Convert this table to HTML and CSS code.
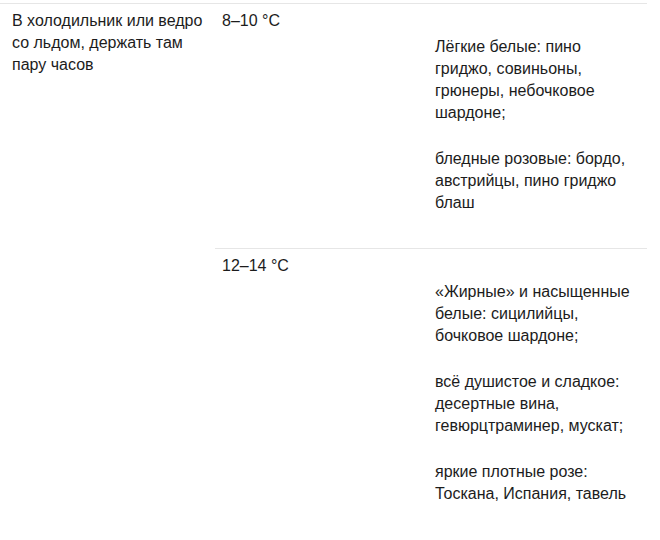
FILE: index.html
```html
<!DOCTYPE html>
<html lang="ru">
<head>
<meta charset="utf-8">
<link rel="stylesheet" href="styles.css">
</head>
<body>
<table class="wine-table">
  <tr>
    <td class="c-how" rowspan="2">В холодильник или ведро со льдом, держать там пару часов</td>
    <td class="c-temp">8–10 °C</td>
    <td class="c-wines">
      <p>Лёгкие белые: пино гриджо, совиньоны, грюнеры, небочковое шардоне;</p>
      <p>бледные розовые: бордо, австрийцы, пино гриджо блаш</p>
    </td>
  </tr>
  <tr>
    <td class="c-temp">12–14 °C</td>
    <td class="c-wines">
      <p>«Жирные» и насыщенные белые: сицилийцы, бочковое шардоне;</p>
      <p>всё душистое и сладкое: десертные вина, гевюрцтраминер, мускат;</p>
      <p>яркие плотные розе: Тоскана, Испания, тавель</p>
    </td>
  </tr>
</table>
</body>
</html>
```

FILE: styles.css
```css
html, body {
  margin: 0;
  padding: 0;
  background: #ffffff;
}

body {
  font-family: "Liberation Sans", Arial, sans-serif;
  font-size: 16px;
  line-height: 22px;
  color: #1c1c1c;
}

.wine-table {
  margin-top: 3px;
  width: 647px;
  border-collapse: collapse;
  table-layout: fixed;
}

.wine-table td {
  vertical-align: top;
  border-top: 1px solid #e6e6e6;
  padding: 6px 0 10px 0;
}

.c-how {
  width: 200px;
  padding-left: 12px !important;
  padding-right: 3px !important;
}

.c-temp {
  width: 205px;
  padding-left: 7px !important;
}

.c-wines {
  padding-left: 8px !important;
  padding-right: 15px !important;
  padding-top: 32px !important;
}

.c-wines p {
  margin: 0 0 24px 0;
}
```
